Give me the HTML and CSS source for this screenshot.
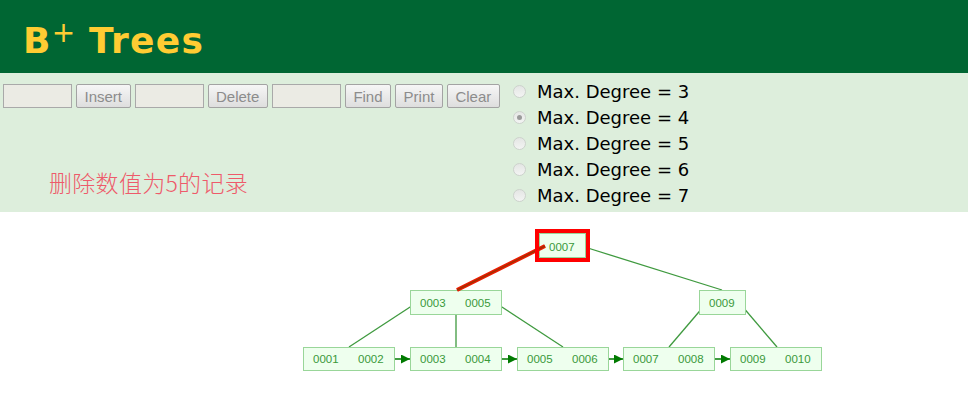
FILE: index.html
```html
<!DOCTYPE html>
<html lang="en">
<head>
    <meta charset="UTF-8">
    <title>B+ Trees</title>
    <link rel="stylesheet" href="styles.css">
</head>
<body>

<!-- Header -->
<div class="header">
    <h1 class="title">B<sup>+</sup> Trees</h1>
</div>

<!-- Controls -->
<div class="controls">
    <div class="left-col">
        <div class="toolbar">
            <input class="field" type="text">
            <button class="btn">Insert</button>
            <input class="field" type="text">
            <button class="btn">Delete</button>
            <input class="field" type="text">
            <button class="btn">Find</button>
            <button class="btn">Print</button>
            <button class="btn">Clear</button>
        </div>
        <div class="note">删除数值为5的记录</div>
    </div>
    <div class="right-col">
        <label class="degree"><span class="radio"></span>Max. Degree = 3</label>
        <label class="degree"><span class="radio checked"></span>Max. Degree = 4</label>
        <label class="degree"><span class="radio"></span>Max. Degree = 5</label>
        <label class="degree"><span class="radio"></span>Max. Degree = 6</label>
        <label class="degree"><span class="radio"></span>Max. Degree = 7</label>
    </div>
</div>

<!-- Tree canvas -->
<div class="canvas">
    <svg class="tree" width="968" height="188" viewBox="0 0 968 188">
        <defs>
            <marker id="arrow" viewBox="0 0 10 10" refX="10" refY="5" markerWidth="9" markerHeight="9" markerUnits="userSpaceOnUse" orient="auto">
                <path d="M0,0 L10,5 L0,10 z" fill="#007a00"/>
            </marker>
        </defs>

        <!-- edges -->
        <g class="edges">
            <line x1="583" y1="34.5" x2="722" y2="78"/>
            <line x1="417" y1="90.5" x2="349" y2="135"/>
            <line x1="456" y1="90.5" x2="456" y2="135"/>
            <line x1="495" y1="90.5" x2="563" y2="135"/>
            <line x1="707" y1="90.5" x2="669" y2="135"/>
            <line x1="739" y1="90.5" x2="777" y2="135"/>
        </g>

        <!-- leaf links -->
        <g class="links">
            <line x1="388" y1="147" x2="410" y2="147" marker-end="url(#arrow)"/>
            <line x1="495" y1="147" x2="517" y2="147" marker-end="url(#arrow)"/>
            <line x1="601" y1="147" x2="623" y2="147" marker-end="url(#arrow)"/>
            <line x1="708" y1="147" x2="730" y2="147" marker-end="url(#arrow)"/>
        </g>

        <!-- nodes -->
        <g class="nodes">
            <rect x="539.5" y="21.5" width="46" height="24"/>
            <rect x="410.5" y="78.5" width="91" height="24"/>
            <rect x="699.5" y="78.5" width="46" height="24"/>
            <rect x="303.5" y="135.5" width="91" height="23"/>
            <rect x="410.5" y="135.5" width="91" height="23"/>
            <rect x="517.5" y="135.5" width="91" height="23"/>
            <rect x="623.5" y="135.5" width="91" height="23"/>
            <rect x="730.5" y="135.5" width="91" height="23"/>
        </g>

        <g class="keys">
            <text x="549" y="38.5">0007</text>
            <text x="420" y="95">0003</text>
            <text x="465" y="95">0005</text>
            <text x="709" y="95">0009</text>
            <text x="313" y="151">0001</text>
            <text x="358" y="151">0002</text>
            <text x="420" y="151">0003</text>
            <text x="465" y="151">0004</text>
            <text x="527" y="151">0005</text>
            <text x="572" y="151">0006</text>
            <text x="633" y="151">0007</text>
            <text x="678" y="151">0008</text>
            <text x="740" y="151">0009</text>
            <text x="785" y="151">0010</text>
        </g>

        <!-- highlight of the search path -->
        <line class="path-hi" x1="545" y1="34" x2="457" y2="78"/>
        <line class="path-core" x1="545" y1="34" x2="457" y2="78"/>
        <rect class="node-hi" x="537" y="19" width="51" height="29"/>
    </svg>
</div>

</body>
</html>
```

FILE: styles.css
```css
/* Global */
body {
    margin: 0;
    background-color: #fff;
    font-family: 'DejaVu Sans', Verdana, sans-serif;
}

/* Header */
.header {
    background-color: #006633;
    height: 73px;
    box-sizing: border-box;
    padding: 20px 0 0 23px;
}

.title {
    margin: 0;
    font-size: 36px;
    line-height: 42px;
    font-weight: bold;
    letter-spacing: 1.3px;
    color: #ffcc33;
}

.title sup {
    font-size: 28px;
    font-weight: normal;
    line-height: 0;
    letter-spacing: 0;
    vertical-align: 11px;
}

/* Controls */
.controls {
    display: flex;
    background-color: #ddeedc;
    height: 139px;
    box-sizing: border-box;
    padding-top: 5px;
}

.left-col {
    width: 508px;
    flex: 0 0 508px;
}

.toolbar {
    display: flex;
    gap: 4px;
    margin: 6px 0 0 3px;
}

.field {
    width: 69px;
    height: 24px;
    box-sizing: border-box;
    margin: 0;
    border: 1px solid #a9a9a9;
    background-color: #ebebe4;
}

.btn {
    height: 24px;
    box-sizing: border-box;
    margin: 0;
    padding: 0 7.5px;
    border: 1px solid #a3a3a3;
    border-radius: 2px;
    background: linear-gradient(#f6f6f6, #dedede);
    color: #8c8c8c;
    font-family: 'Liberation Sans', Arial, sans-serif;
    font-size: 15px;
}

.note {
    margin: 59px 0 0 49px;
    font-family: 'Noto Sans CJK SC', sans-serif;
    font-size: 23px;
    line-height: 30px;
    letter-spacing: 0.3px;
    color: #ee5a6a;
    font-weight: 300;
}

.right-col {
    padding-left: 5px;
}

.degree {
    display: flex;
    align-items: center;
    height: 26px;
    font-size: 18px;
    color: #000;
}

.radio {
    width: 13px;
    height: 13px;
    box-sizing: border-box;
    border-radius: 50%;
    border: 1px solid #cdd2cd;
    background: linear-gradient(#e4e6e4, #f3f4f3);
    margin-right: 11px;
    position: relative;
}

.radio.checked::after {
    content: '';
    position: absolute;
    left: 3px;
    top: 3px;
    width: 5px;
    height: 5px;
    border-radius: 50%;
    background-color: #9a9a9a;
}

/* Tree */
.canvas {
    background-color: #fff;
}

.tree {
    display: block;
}

.edges line {
    stroke: #3f9a3f;
    stroke-width: 1.3;
}

.links line {
    stroke: #007a00;
    stroke-width: 1.5;
}

.nodes rect {
    fill: #eeffee;
    stroke: #99d699;
    stroke-width: 1;
}

.keys text {
    font-family: 'Liberation Sans', Arial, sans-serif;
    font-size: 11.5px;
    fill: #3a993a;
}

.path-hi {
    stroke: #ee1a00;
    stroke-width: 4;
}

.path-core {
    stroke: #a33000;
    stroke-width: 1.5;
}

.node-hi {
    fill: none;
    stroke: #ff0000;
    stroke-width: 4;
}
```
